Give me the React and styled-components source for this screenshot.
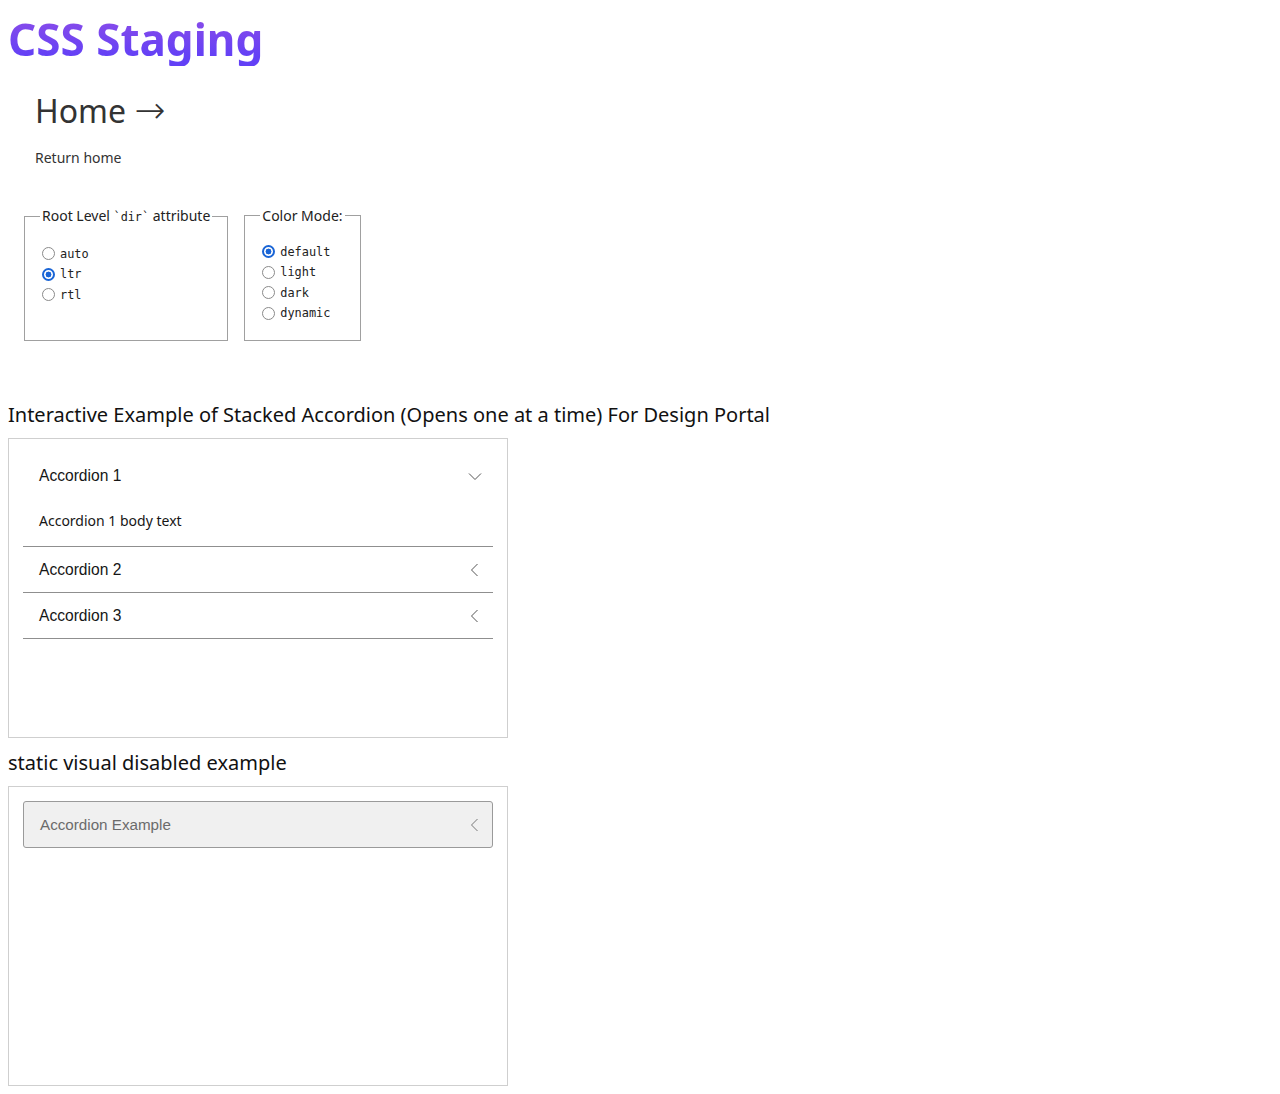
import React, { useState } from "react";
import styled, { createGlobalStyle } from "styled-components";

const GlobalStyle = createGlobalStyle`
  body {
    margin: 8px;
    font-family: "Noto Sans", sans-serif;
    color: #111;
    background: #fff;
  }
`;

const Title = styled.h1`
  margin: 0;
  padding-top: 5px;
  display: inline-block;
  font-size: 44px;
  font-weight: 700;
  line-height: 1.2;
  background: linear-gradient(180deg, #8a4ce9 15%, #6240f6 85%);
  -webkit-background-clip: text;
  background-clip: text;
  color: transparent;
`;

const Nav = styled.nav`
  padding-left: 27px;
  margin-top: 23px;
  color: #333;
`;

const NavLink = styled.a`
  display: block;
  height: 43.6px;
  font-size: 32px;
  line-height: 43.6px;
  color: #333;
  text-decoration: none;
`;

const Arrow = styled.span`
  font-family: "DejaVu Sans", sans-serif;
  font-weight: 200;
  font-size: 37px;
  line-height: 1;
`;

const NavNote = styled.p`
  margin: 16px 0 0;
  font-size: 14px;
  line-height: 19px;
`;

const Controls = styled.div`
  display: flex;
  gap: 16px;
  margin: 39px 0 0 16px;
  align-items: stretch;
`;

const Fieldset = styled.fieldset`
  margin: 0;
  padding: 16px 15px 17px;
  border: 1px solid #a0a0a0;
  min-width: 0;
`;

const Legend = styled.legend`
  padding: 0 2px;
  font-size: 14px;
  line-height: 19px;
  color: #222;
`;

const Mono = styled.code`
  font-family: "DejaVu Sans Mono", monospace;
  font-size: 11.8px;
`;

const Option = styled.label`
  display: flex;
  align-items: center;
  height: 20.5px;
  font-family: "DejaVu Sans Mono", monospace;
  font-size: 11.9px;
  color: #222;
`;

const Radio = styled.input.attrs({ type: "radio" })`
  appearance: none;
  box-sizing: border-box;
  margin: 0 5px 0 2px;
  width: 13px;
  height: 13px;
  border-radius: 50%;
  border: 1.5px solid #8a8a8a;
  background: #fff;
  cursor: pointer;

  &:checked {
    border: 2px solid #1a65d6;
    background: radial-gradient(circle, #1a65d6 0 2.7px, #fff 3.2px);
  }
`;

const SectionTitle = styled.h3`
  margin: ${(p) => p.$top}px 0 10px;
  font-size: 20px;
  font-weight: 400;
  line-height: 27px;
`;

const Frame = styled.div`
  width: 500px;
  height: 300px;
  box-sizing: border-box;
  border: 1px solid #cfcfcf;
  padding: 14px;
`;

const Item = styled.div`
  border-bottom: 1px solid #8f8f8f;
`;

const Header = styled.button`
  display: flex;
  align-items: center;
  justify-content: space-between;
  width: 100%;
  height: 45px;
  padding: 0 10px 0 16px;
  border: none;
  background: transparent;
  font-family: "Liberation Sans", Arial, sans-serif;
  font-size: 15.6px;
  color: #161616;
  cursor: pointer;
  text-align: left;
`;

const Body = styled.div`
  padding: 13px 16px 15px;
  font-size: 14px;
  line-height: 20px;
  color: #161616;
`;

const DisabledHeader = styled.div`
  display: flex;
  align-items: center;
  justify-content: space-between;
  height: 45px;
  padding: 0 9px 0 16px;
  border: 1px solid #9a9a9a;
  border-radius: 3px;
  background: #f0f0f0;
  font-family: "Liberation Sans", Arial, sans-serif;
  font-size: 15.2px;
  color: #6b6b6b;
`;

const Chevron = ({ open, color = "#555" }) => (
  <svg
    width="16"
    height="16"
    viewBox="0 0 16 16"
    style={{ transform: open ? "none" : "rotate(90deg)" }}
  >
    <path d="M2 5.5 L8 11.5 L14 5.5" fill="none" stroke={color} strokeWidth="1" />
  </svg>
);

const items = [
  { title: "Accordion 1", body: "Accordion 1 body text" },
  { title: "Accordion 2", body: "Accordion 2 body text" },
  { title: "Accordion 3", body: "Accordion 3 body text" },
];

export default function App() {
  const [dir, setDir] = useState("ltr");
  const [mode, setMode] = useState("default");
  const [open, setOpen] = useState(0);

  return (
    <>
      <GlobalStyle />
      <Title>CSS Staging</Title>
      <Nav>
        <NavLink href="#">
          Home <Arrow>→</Arrow>
        </NavLink>
        <NavNote>Return home</NavNote>
      </Nav>

      <Controls>
        <Fieldset>
          <Legend>
            Root Level <Mono>`dir`</Mono> attribute
          </Legend>
          {["auto", "ltr", "rtl"].map((v) => (
            <Option key={v}>
              <Radio name="dir" checked={dir === v} onChange={() => setDir(v)} />
              {v}
            </Option>
          ))}
        </Fieldset>
        <Fieldset>
          <Legend>Color Mode:</Legend>
          {["default", "light", "dark", "dynamic"].map((v) => (
            <Option key={v}>
              <Radio name="mode" checked={mode === v} onChange={() => setMode(v)} />
              {v}
            </Option>
          ))}
        </Fieldset>
      </Controls>

      <SectionTitle $top={60}>
        Interactive Example of Stacked Accordion (Opens one at a time) For Design Portal
      </SectionTitle>
      <Frame>
        {items.map((it, i) => (
          <Item key={it.title}>
            <Header onClick={() => setOpen(open === i ? -1 : i)}>
              {it.title}
              <Chevron open={open === i} />
            </Header>
            {open === i && <Body>{it.body}</Body>}
          </Item>
        ))}
      </Frame>

      <SectionTitle $top={11}>static visual disabled example</SectionTitle>
      <Frame>
        <DisabledHeader>
          Accordion Example
          <Chevron color="#777" />
        </DisabledHeader>
      </Frame>
    </>
  );
}
